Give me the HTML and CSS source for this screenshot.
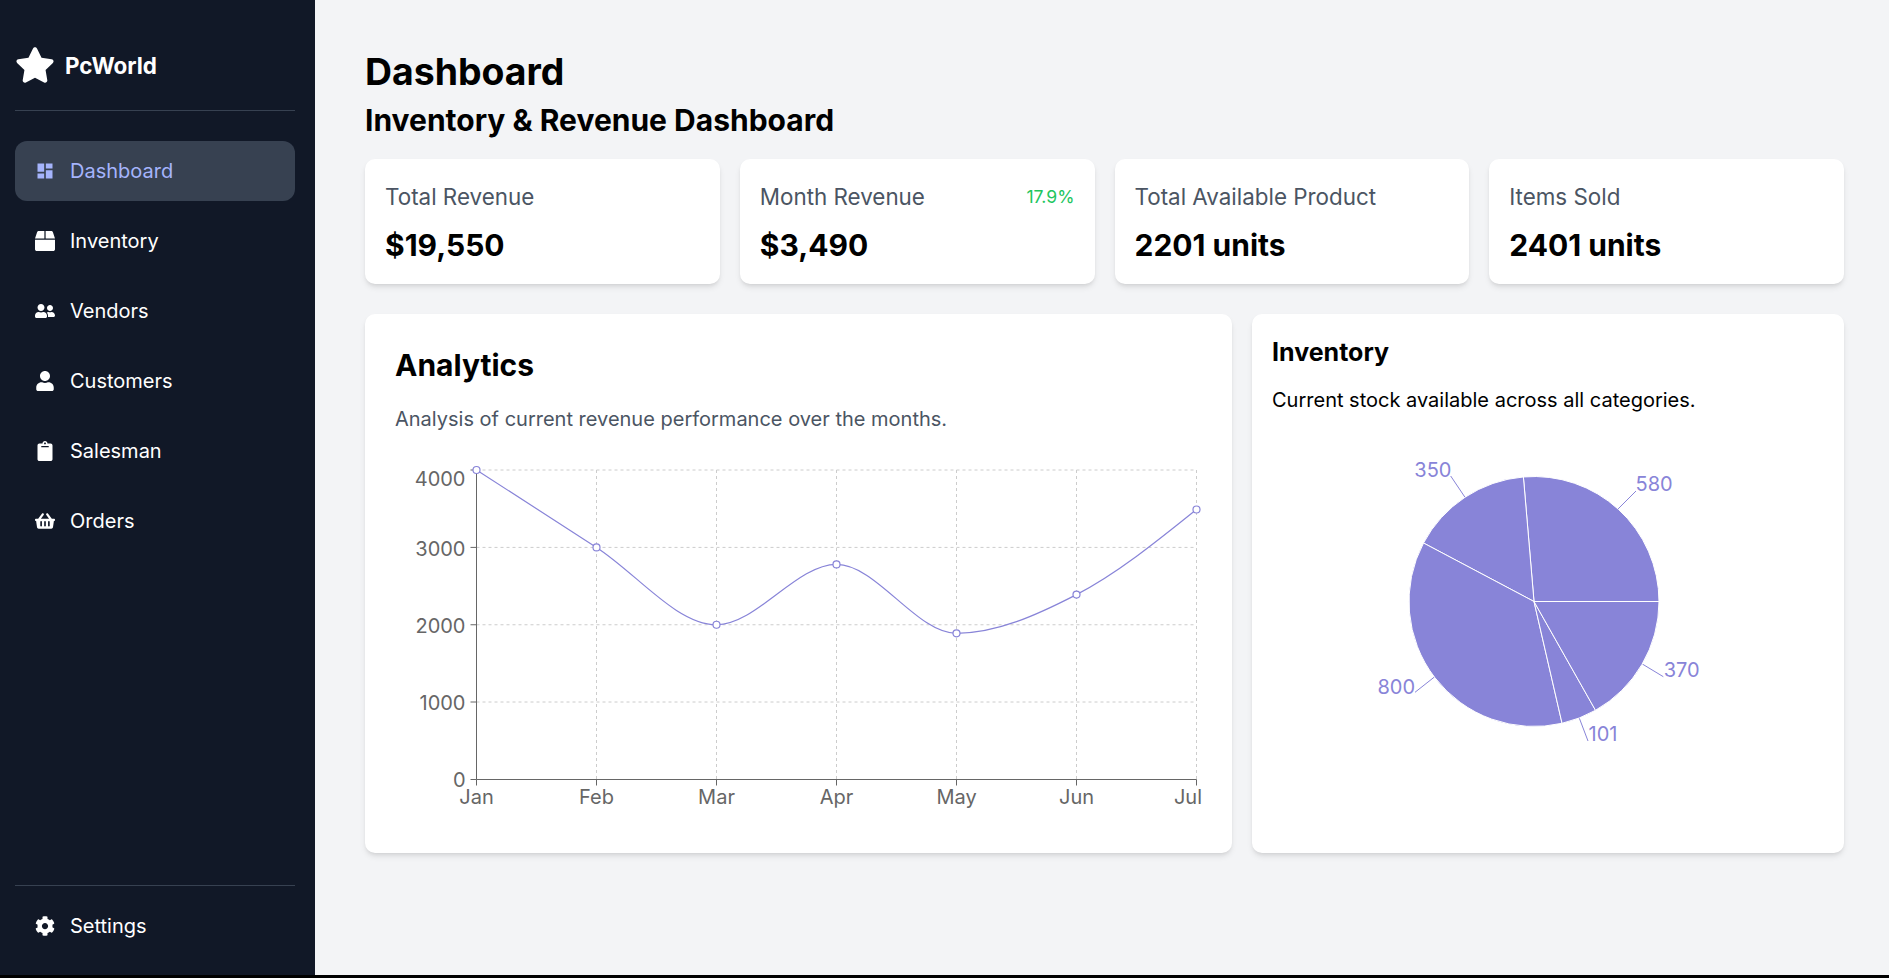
FILE: index.html
```html
<!DOCTYPE html>
<html lang="en">
<head>
  <meta charset="UTF-8">
  <title>PcWorld Dashboard</title>
  <link rel="stylesheet" href="styles.css">
</head>
<body>
  <div class="app">
    <aside class="sidebar">
      <div class="brand">
        <svg class="brand-star" viewBox="0 0 576 512"><path d="M259.3 17.8L194 150.2 47.9 171.5c-26.2 3.8-36.7 36.1-17.7 54.6l105.7 103-25 145.5c-4.5 26.3 23.2 46 46.4 33.7L288 439.6l130.7 68.7c23.2 12.2 50.9-7.4 46.4-33.7l-25-145.5 105.7-103c19-18.5 8.5-50.8-17.7-54.6L382 150.2 316.7 17.8c-11.7-23.6-45.6-23.9-57.4 0z"/></svg>
        <span class="brand-name">PcWorld</span>
      </div>

      <nav class="nav">
        <a class="nav-item active" href="#">
          <svg class="nav-icon" viewBox="0 0 24 24"><path d="M3 13h8V3H3v10zm0 8h8v-6H3v6zm10 0h8V11h-8v10zm0-18v6h8V3h-8z"/></svg>
          Dashboard
        </a>
        <a class="nav-item" href="#">
          <svg class="nav-icon" viewBox="0 0 512 512"><path d="M509.5 184.6L458.9 32.8C452.4 13.2 434.1 0 413.4 0H272v192h238.7c-.4-2.5-.4-5-1.2-7.4zM240 0H98.6c-20.7 0-39 13.2-45.5 32.8L2.5 184.6c-.8 2.4-.8 4.9-1.2 7.4H240V0zM0 224v240c0 26.5 21.5 48 48 48h416c26.5 0 48-21.5 48-48V224H0z"/></svg>
          Inventory
        </a>
        <a class="nav-item" href="#">
          <svg class="nav-icon" viewBox="0 0 640 512"><path d="M192 256c61.9 0 112-50.1 112-112S253.9 32 192 32 80 82.1 80 144s50.1 112 112 112zm76.8 32h-8.3c-20.8 10-43.9 16-68.5 16s-47.6-6-68.5-16h-8.3C51.6 288 0 339.6 0 403.2V432c0 26.5 21.5 48 48 48h288c26.5 0 48-21.5 48-48v-28.8c0-63.6-51.6-115.2-115.2-115.2zM480 256c53 0 96-43 96-96s-43-96-96-96-96 43-96 96 43 96 96 96zm48 32h-3.8c-13.9 4.8-28.6 8-44.2 8s-30.3-3.2-44.2-8H432c-20.4 0-39.2 5.9-55.7 15.4 24.4 26.3 39.7 61.2 39.7 99.8v38.4c0 2.2-.5 4.3-.6 6.4H592c26.5 0 48-21.5 48-48 0-61.9-50.1-112-112-112z"/></svg>
          Vendors
        </a>
        <a class="nav-item" href="#">
          <svg class="nav-icon" viewBox="0 0 448 512"><path d="M224 256c70.7 0 128-57.3 128-128S294.7 0 224 0 96 57.3 96 128s57.3 128 128 128zm89.6 32h-16.7c-22.2 10.2-46.9 16-72.9 16s-50.6-5.8-72.9-16h-16.7C60.2 288 0 348.2 0 422.4V464c0 26.5 21.5 48 48 48h352c26.5 0 48-21.5 48-48v-41.6c0-74.2-60.2-134.4-134.4-134.4z"/></svg>
          Customers
        </a>
        <a class="nav-item" href="#">
          <svg class="nav-icon" viewBox="0 0 384 512"><path d="M384 112v352c0 26.51-21.49 48-48 48H48c-26.51 0-48-21.49-48-48V112c0-26.51 21.49-48 48-48h80c0-35.29 28.71-64 64-64s64 28.71 64 64h80c26.51 0 48 21.49 48 48zM192 40c-13.255 0-24 10.745-24 24s10.745 24 24 24 24-10.745 24-24-10.745-24-24-24m96 114v-20a6 6 0 0 0-6-6H102a6 6 0 0 0-6 6v20a6 6 0 0 0 6 6h180a6 6 0 0 0 6-6z"/></svg>
          Salesman
        </a>
        <a class="nav-item" href="#">
          <svg class="nav-icon" viewBox="0 0 576 512"><path d="M576 216v16c0 13.255-10.745 24-24 24h-8l-26.113 182.788C514.509 462.435 494.257 480 470.37 480H105.63c-23.887 0-44.139-17.565-47.518-41.212L32 256h-8c-13.255 0-24-10.745-24-24v-16c0-13.255 10.745-24 24-24h67.341l106.78-146.821c10.395-14.292 30.407-17.453 44.701-7.058 14.293 10.395 17.453 30.408 7.058 44.701L170.477 192h235.046L326.12 82.821c-10.395-14.292-7.234-34.306 7.059-44.701 14.291-10.395 34.306-7.235 44.701 7.058L484.659 192H552c13.255 0 24 10.745 24 24zM312 392V280c0-13.255-10.745-24-24-24s-24 10.745-24 24v112c0 13.255 10.745 24 24 24s24-10.745 24-24zm112 0V280c0-13.255-10.745-24-24-24s-24 10.745-24 24v112c0 13.255 10.745 24 24 24s24-10.745 24-24zm-224 0V280c0-13.255-10.745-24-24-24s-24 10.745-24 24v112c0 13.255 10.745 24 24 24s24-10.745 24-24z"/></svg>
          Orders
        </a>
      </nav>

      <div class="sidebar-footer">
        <a class="nav-item" href="#">
          <svg class="nav-icon" viewBox="0 0 512 512"><path d="M487.4 315.7l-42.6-24.6c4.3-23.2 4.3-47 0-70.2l42.6-24.6c4.9-2.8 7.1-8.6 5.5-14-11.1-35.6-30-67.8-54.7-94.6-3.8-4.1-10-5.1-14.8-2.3L380.8 110c-17.9-15.4-38.5-27.3-60.8-35.1V25.8c0-5.6-3.9-10.5-9.4-11.7-36.7-8.2-74.3-7.8-109.2 0-5.5 1.2-9.4 6.1-9.4 11.7V75c-22.2 7.9-42.8 19.8-60.8 35.1L88.7 85.5c-4.9-2.8-11-1.9-14.8 2.3-24.7 26.7-43.6 58.9-54.7 94.6-1.7 5.4.6 11.2 5.5 14L67.3 221c-4.3 23.2-4.3 47 0 70.2l-42.6 24.6c-4.9 2.8-7.1 8.6-5.5 14 11.1 35.6 30 67.8 54.7 94.6 3.8 4.1 10 5.1 14.8 2.3l42.6-24.6c17.9 15.4 38.5 27.3 60.8 35.1v49.2c0 5.6 3.9 10.5 9.4 11.7 36.7 8.2 74.3 7.8 109.2 0 5.5-1.2 9.4-6.1 9.4-11.7v-49.2c22.2-7.9 42.8-19.8 60.8-35.1l42.6 24.6c4.9 2.8 11 1.9 14.8-2.3 24.7-26.7 43.6-58.9 54.7-94.6 1.5-5.5-.7-11.3-5.6-14.1zM256 336c-44.1 0-80-35.9-80-80s35.9-80 80-80 80 35.9 80 80-35.9 80-80 80z"/></svg>
          Settings
        </a>
      </div>
    </aside>

    <main class="main">
      <h1 class="page-title">Dashboard</h1>
      <h2 class="page-subtitle">Inventory &amp; Revenue Dashboard</h2>

      <section class="stats">
        <div class="stat-card">
          <div class="stat-head"><span>Total Revenue</span></div>
          <div class="stat-value">$19,550</div>
        </div>
        <div class="stat-card">
          <div class="stat-head"><span>Month Revenue</span><span class="stat-trend">17.9%</span></div>
          <div class="stat-value">$3,490</div>
        </div>
        <div class="stat-card">
          <div class="stat-head"><span>Total Available Product</span></div>
          <div class="stat-value">2201 units</div>
        </div>
        <div class="stat-card">
          <div class="stat-head"><span>Items Sold</span></div>
          <div class="stat-value">2401 units</div>
        </div>
      </section>

      <section class="panels">
        <div class="panel panel-analytics">
          <h3 class="analytics-title">Analytics</h3>
          <p class="analytics-desc">Analysis of current revenue performance over the months.</p>
          <svg class="chart" width="807" height="360">
            <g class="grid">
              <line x1="81.5" y1="10" x2="801.5" y2="10"/>
              <line x1="81.5" y1="87.4" x2="801.5" y2="87.4"/>
              <line x1="81.5" y1="164.75" x2="801.5" y2="164.75"/>
              <line x1="81.5" y1="242" x2="801.5" y2="242"/>
              <line x1="201.5" y1="10" x2="201.5" y2="319.5"/>
              <line x1="321.5" y1="10" x2="321.5" y2="319.5"/>
              <line x1="441.5" y1="10" x2="441.5" y2="319.5"/>
              <line x1="561.5" y1="10" x2="561.5" y2="319.5"/>
              <line x1="681.5" y1="10" x2="681.5" y2="319.5"/>
              <line x1="801.5" y1="10" x2="801.5" y2="319.5"/>
            </g>
            <g class="axis">
              <line x1="81.5" y1="10" x2="81.5" y2="319.5"/>
              <line x1="81.5" y1="319.5" x2="801.5" y2="319.5"/>
              <line x1="75.5" y1="10" x2="81.5" y2="10"/>
              <line x1="75.5" y1="87.4" x2="81.5" y2="87.4"/>
              <line x1="75.5" y1="164.75" x2="81.5" y2="164.75"/>
              <line x1="75.5" y1="242" x2="81.5" y2="242"/>
              <line x1="75.5" y1="319.5" x2="81.5" y2="319.5"/>
              <line x1="81.5" y1="319.5" x2="81.5" y2="325.5"/>
              <line x1="201.5" y1="319.5" x2="201.5" y2="325.5"/>
              <line x1="321.5" y1="319.5" x2="321.5" y2="325.5"/>
              <line x1="441.5" y1="319.5" x2="441.5" y2="325.5"/>
              <line x1="561.5" y1="319.5" x2="561.5" y2="325.5"/>
              <line x1="681.5" y1="319.5" x2="681.5" y2="325.5"/>
              <line x1="801.5" y1="319.5" x2="801.5" y2="325.5"/>
            </g>
            <g class="tick tick-y">
              <text x="70.5" y="26">4000</text>
              <text x="70.5" y="96">3000</text>
              <text x="70.5" y="173">2000</text>
              <text x="70.5" y="250">1000</text>
              <text x="70.5" y="327">0</text>
            </g>
            <g class="tick tick-x">
              <text x="81.5" y="344">Jan</text>
              <text x="201.5" y="344">Feb</text>
              <text x="321.5" y="344">Mar</text>
              <text x="441.5" y="344">Apr</text>
              <text x="561.5" y="344">May</text>
              <text x="681.5" y="344">Jun</text>
              <text x="793" y="344">Jul</text>
            </g>
            <path class="curve" d="M81.5,10 C121.5,35.8 161.5,61.6 201.5,87.4 C241.5,113.2 281.5,164.75 321.5,164.75 C361.5,164.75 401.5,104.4 441.5,104.4 C481.5,104.4 521.5,173.3 561.5,173.3 C601.5,173.3 641.5,155.2 681.5,134.6 C721.5,114 761.5,81.7 801.5,49.5"/>
            <g class="dots">
              <circle cx="81.5" cy="10" r="3.5"/>
              <circle cx="201.5" cy="87.4" r="3.5"/>
              <circle cx="321.5" cy="164.75" r="3.5"/>
              <circle cx="441.5" cy="104.4" r="3.5"/>
              <circle cx="561.5" cy="173.3" r="3.5"/>
              <circle cx="681.5" cy="134.6" r="3.5"/>
              <circle cx="801.5" cy="49.5" r="3.5"/>
            </g>
          </svg>
        </div>

        <div class="panel panel-inventory">
          <h3 class="inventory-title">Inventory</h3>
          <p class="inventory-desc">Current stock available across all categories.</p>
          <svg class="pie" width="552" height="320">
            <g class="pie-lines">
              <line x1="346" y1="69" x2="364" y2="51"/>
              <line x1="193" y1="57.3" x2="178.7" y2="36"/>
              <line x1="162" y1="237.3" x2="143" y2="252.3"/>
              <line x1="307" y1="277.3" x2="316" y2="301"/>
              <line x1="370.3" y1="224" x2="391.3" y2="236.7"/>
            </g>
            <g class="pie-slices">
              <path d="M262,161.5 L387,161.5 A125,125 0 0 0 251.4,36.95 Z"/>
              <path d="M262,161.5 L251.4,36.95 A125,125 0 0 0 151.5,103 Z"/>
              <path d="M262,161.5 L151.5,103 A125,125 0 0 0 290.05,283.3 Z"/>
              <path d="M262,161.5 L290.05,283.3 A125,125 0 0 0 323.5,270.3 Z"/>
              <path d="M262,161.5 L323.5,270.3 A125,125 0 0 0 387,161.5 Z"/>
            </g>
            <g class="pie-labels">
              <text x="363.5" y="51">580</text>
              <text class="label-end" x="179.5" y="37">350</text>
              <text class="label-end" x="143" y="253.5">800</text>
              <text x="316.5" y="301">101</text>
              <text x="391.7" y="237.3">370</text>
            </g>
          </svg>
        </div>
      </section>
    </main>
  </div>
</body>
</html>
```

FILE: styles.css
```css
* { box-sizing: border-box; margin: 0; padding: 0; }

html { background: #000; }

body { font-family: "Inter", "Liberation Sans", sans-serif; color: #000; }

.app {
  display: flex;
  height: 975px;
  background: #f3f4f6;
}

/* ---------- sidebar ---------- */
.sidebar {
  display: flex;
  flex-direction: column;
  flex: 0 0 315px;
  padding: 0 20px 0 15px;
  background: #111827;
  color: #fff;
}

.brand {
  display: flex;
  align-items: center;
  gap: 10px;
  height: 111px;
  padding-top: 20px;
  border-bottom: 1px solid #374151;
}

.brand-star { width: 40px; height: 36px; fill: #fff; }
.brand-name { font-size: 22.4px; font-weight: 700; }

.nav {
  display: flex;
  flex-direction: column;
  gap: 10px;
  margin-top: 30px;
}

.nav-item {
  display: flex;
  align-items: center;
  gap: 15px;
  height: 60px;
  padding: 0 20px;
  border-radius: 12px;
  color: #fff;
  font-size: 20px;
  text-decoration: none;
}

.nav-item.active { background: #374151; color: #a5b4fc; }

.nav-icon { flex: none; width: 20px; height: 20px; fill: currentColor; }

.sidebar-footer {
  margin-top: auto;
  padding: 10px 0 19px;
  border-top: 1px solid #374151;
}

/* ---------- main ---------- */
.main {
  flex: 1;
  min-width: 0;
  padding: 50px 45px 0 50px;
}

.page-title { font-size: 37.4px; font-weight: 700; line-height: 44px; }

.page-subtitle {
  margin-top: 8px;
  font-size: 30px;
  font-weight: 700;
  line-height: 36px;
}

.stats {
  display: grid;
  grid-template-columns: repeat(4, 1fr);
  gap: 20px;
  margin-top: 21px;
}

.stat-card,
.panel {
  background: #fff;
  border-radius: 10px;
  box-shadow: 0 4px 6px -1px rgba(0, 0, 0, .1), 0 2px 4px -2px rgba(0, 0, 0, .1);
}

.stat-card { height: 125px; padding: 24px 20px 0; }

.stat-head {
  display: flex;
  justify-content: space-between;
  align-items: center;
  font-size: 22.4px;
  line-height: 28px;
  color: #4b5563;
}

.stat-trend { font-size: 17.6px; color: #22c55e; }

.stat-value {
  margin-top: 14px;
  font-size: 30px;
  font-weight: 700;
  line-height: 40px;
}

.panels {
  display: grid;
  grid-template-columns: 867fr 592fr;
  gap: 20px;
  margin-top: 30px;
}

.panel { height: 539px; }

.panel-analytics { padding: 31px 30px 30px; }
.panel-inventory { padding: 22px 20px 20px; }

.analytics-title { font-size: 30px; font-weight: 700; line-height: 40px; }

.analytics-desc {
  margin-top: 22px;
  font-size: 20px;
  line-height: 24px;
  color: #4b5563;
}

.inventory-title { font-size: 25px; font-weight: 700; line-height: 32px; }

.inventory-desc { margin-top: 20px; font-size: 20px; line-height: 24px; }

.chart { display: block; margin-top: 29px; overflow: visible; }
.pie { display: block; margin-top: 28px; overflow: visible; }

/* ---------- charts ---------- */
.grid line { stroke: #ccc; stroke-dasharray: 3 3; }
.axis line { stroke: #666; }

.tick text { font-size: 20px; fill: #666; }
.tick-y text { text-anchor: end; }
.tick-x text { text-anchor: middle; }

.curve { fill: none; stroke: #8884d8; stroke-width: 1.2; }
.dots circle { fill: #fff; stroke: #8884d8; stroke-width: 1.2; }

.pie-lines line { stroke: #8884d8; }
.pie-slices path { fill: #8884d8; stroke: #fff; }
.pie-labels text { font-size: 20px; fill: #8884d8; }
.pie-labels .label-end { text-anchor: end; }
```
